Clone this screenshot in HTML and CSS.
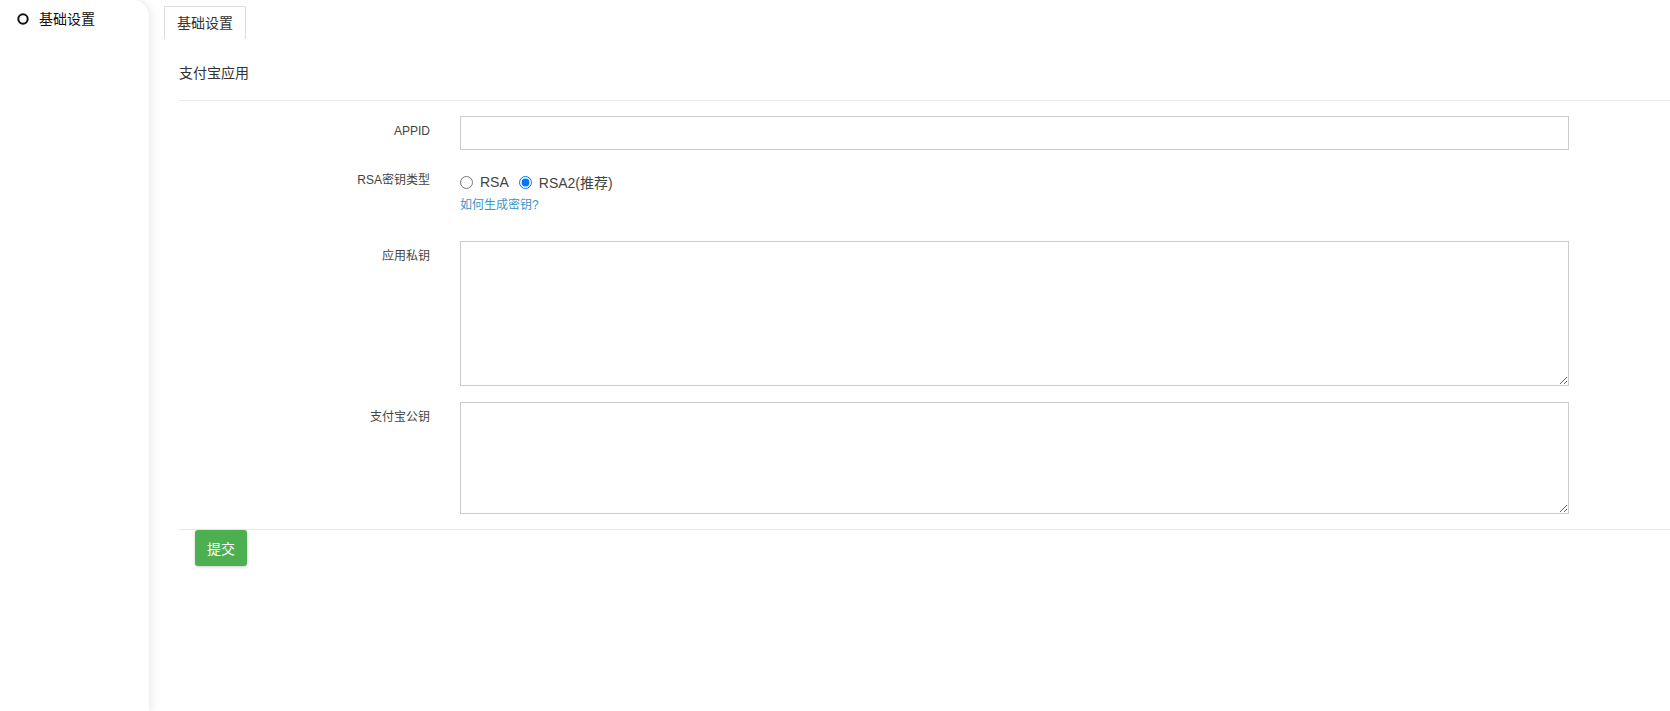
FILE: index.html
```html
<!DOCTYPE html>
<html lang="zh-CN">
<head>
<meta charset="utf-8">
<title>基础设置</title>
<link rel="stylesheet" href="styles.css">
</head>
<body>
<div class="layout">
  <aside class="sidebar">
    <div class="side-item">
      <svg class="side-icon" width="12" height="12" viewBox="0 0 12 12"><circle cx="6" cy="6" r="4.7" fill="none" stroke="#111" stroke-width="2"/></svg>
      <span>基础设置</span>
    </div>
  </aside>
  <main class="main">
    <div class="tabs">
      <div class="tab active">基础设置</div>
    </div>
    <section class="panel">
      <div class="panel-head">支付宝应用</div>
      <form class="form">
        <div class="row row-input">
          <label class="lbl">APPID</label>
          <div class="field"><input class="input" type="text"></div>
        </div>
        <div class="row row-radio">
          <label class="lbl">RSA密钥类型</label>
          <div class="field">
            <div class="radios">
              <label class="radio"><input type="radio" name="rsa"><span>RSA</span></label>
              <label class="radio"><input type="radio" name="rsa" checked><span>RSA2(推荐)</span></label>
            </div>
            <a class="help" href="#">如何生成密钥?</a>
          </div>
        </div>
        <div class="row row-ta1">
          <label class="lbl">应用私钥</label>
          <div class="field"><textarea class="ta ta1"></textarea></div>
        </div>
        <div class="row row-ta2">
          <label class="lbl">支付宝公钥</label>
          <div class="field"><textarea class="ta ta2"></textarea></div>
        </div>
        <div class="foot">
          <button type="button" class="btn">提交</button>
        </div>
      </form>
    </section>
  </main>
</div>
</body>
</html>
```

FILE: styles.css
```css
* { box-sizing: border-box; }
html, body { margin: 0; padding: 0; background: #fff; }
body {
  font-family: "Liberation Sans", "Noto Sans CJK SC", sans-serif;
  color: #333;
  height: 711px;
  overflow: hidden;
}
.layout { display: flex; height: 711px; }
.sidebar {
  width: 149px;
  flex: 0 0 149px;
  background: #fff;
  border-top-right-radius: 16px;
  box-shadow: 2px 0 10px rgba(0, 0, 0, 0.09);
  position: relative;
  z-index: 1;
}
.side-item {
  display: flex;
  align-items: center;
  padding: 9px 0 0 17px;
  height: 29px;
  font-size: 14px;
  line-height: 20px;
  color: #111;
}
.side-icon { margin-right: 10px; }
.main { flex: 1; padding: 6px 0 0 15px; }
.tabs { display: flex; }
.tab {
  border: 1px solid #ddd;
  border-bottom: none;
  padding: 0 12px;
  height: 33px;
  line-height: 32px;
  font-size: 14px;
  color: #333;
  background: #fff;
}
.panel { margin-left: 15px; }
.panel-head {
  padding: 24px 0 17px;
  line-height: 20px;
  font-size: 14px;
  color: #333;
  border-bottom: 1px solid #ebebeb;
}
.form { padding-top: 15px; }
.row {
  display: grid;
  grid-template-columns: 251px 1109px;
  column-gap: 30px;
}
.lbl {
  text-align: right;
  font-size: 12px;
  line-height: 14px;
  padding-top: 8px;
  color: #444;
}
.row-input { margin-bottom: 15px; }
.input {
  display: block;
  width: 100%;
  height: 34px;
  border: 1px solid #ccc;
  border-radius: 0;
  outline: none;
  font: inherit;
  padding: 6px 10px;
}
.row-radio { margin-bottom: 27px; }
.radios {
  display: flex;
  align-items: center;
  height: 20px;
  margin-top: 7px;
  gap: 10px;
}
.radio {
  display: flex;
  align-items: center;
  font-size: 14px;
  color: #444;
}
.radio input { margin: 0 7px 0 0; width: 13px; height: 13px; }
.help {
  display: block;
  margin-top: 5px;
  font-size: 12px;
  line-height: 17px;
  color: #3a96c8;
  text-decoration: none;
}
.ta {
  display: block;
  width: 100%;
  border: 1px solid #ccc;
  border-radius: 0;
  outline: none;
  font: inherit;
}
.row-ta1 { margin-bottom: 16px; }
.ta1 { height: 145px; }
.ta2 { height: 112px; }
.foot {
  margin-top: 15px;
  border-top: 1px solid #ebebeb;
  padding-left: 16px;
}
.btn {
  display: block;
  width: 52px;
  height: 36px;
  border: none;
  border-radius: 3px;
  background: #4caf50;
  color: #fff;
  font-family: inherit;
  font-size: 14px;
  padding: 0;
  box-shadow: 0 1px 3px rgba(0, 0, 0, 0.2);
}
```
